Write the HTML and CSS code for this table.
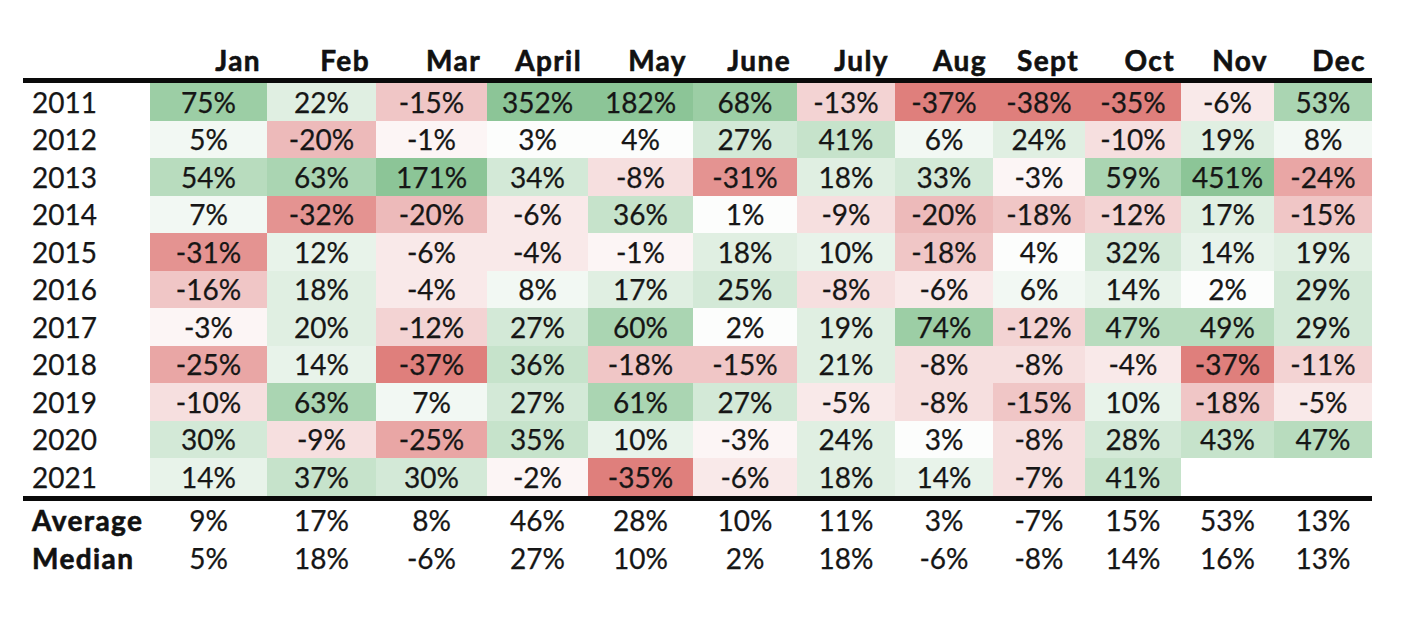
FILE: index.html
```html
<!DOCTYPE html>
<html lang="en">
<head>
<meta charset="utf-8">
<title>Monthly returns</title>
<link rel="stylesheet" href="styles.css">
</head>
<body>
<div class="sheet">
  <div class="row head">
    <div></div><div class="m">Jan</div><div class="m">Feb</div><div class="m">Mar</div><div class="m">April</div><div class="m">May</div><div class="m">June</div><div class="m">July</div><div class="m">Aug</div><div class="m">Sept</div><div class="m">Oct</div><div class="m">Nov</div><div class="m">Dec</div>
  </div>
  <div class="row">
    <div class="yr">2011</div><div class="c p8">75%</div><div class="c p3">22%</div><div class="c n4">-15%</div><div class="c p9">352%</div><div class="c p9">182%</div><div class="c p8">68%</div><div class="c n3">-13%</div><div class="c n8">-37%</div><div class="c n8">-38%</div><div class="c n8">-35%</div><div class="c n1">-6%</div><div class="c p7">53%</div>
  </div>
  <div class="row">
    <div class="yr">2012</div><div class="c p1">5%</div><div class="c n5">-20%</div><div class="c n0">-1%</div><div class="c p0">3%</div><div class="c p0">4%</div><div class="c p4">27%</div><div class="c p5">41%</div><div class="c p1">6%</div><div class="c p3">24%</div><div class="c n2">-10%</div><div class="c p3">19%</div><div class="c p1">8%</div>
  </div>
  <div class="row">
    <div class="yr">2013</div><div class="c p6">54%</div><div class="c p7">63%</div><div class="c p9">171%</div><div class="c p4">34%</div><div class="c n2">-8%</div><div class="c n7">-31%</div><div class="c p3">18%</div><div class="c p4">33%</div><div class="c n0">-3%</div><div class="c p7">59%</div><div class="c p9">451%</div><div class="c n6">-24%</div>
  </div>
  <div class="row">
    <div class="yr">2014</div><div class="c p1">7%</div><div class="c n7">-32%</div><div class="c n5">-20%</div><div class="c n1">-6%</div><div class="c p5">36%</div><div class="c p0">1%</div><div class="c n2">-9%</div><div class="c n5">-20%</div><div class="c n4">-18%</div><div class="c n3">-12%</div><div class="c p3">17%</div><div class="c n4">-15%</div>
  </div>
  <div class="row">
    <div class="yr">2015</div><div class="c n7">-31%</div><div class="c p2">12%</div><div class="c n1">-6%</div><div class="c n1">-4%</div><div class="c n0">-1%</div><div class="c p3">18%</div><div class="c p2">10%</div><div class="c n4">-18%</div><div class="c p0">4%</div><div class="c p4">32%</div><div class="c p2">14%</div><div class="c p3">19%</div>
  </div>
  <div class="row">
    <div class="yr">2016</div><div class="c n4">-16%</div><div class="c p3">18%</div><div class="c n1">-4%</div><div class="c p1">8%</div><div class="c p3">17%</div><div class="c p4">25%</div><div class="c n2">-8%</div><div class="c n1">-6%</div><div class="c p1">6%</div><div class="c p2">14%</div><div class="c p0">2%</div><div class="c p4">29%</div>
  </div>
  <div class="row">
    <div class="yr">2017</div><div class="c n0">-3%</div><div class="c p3">20%</div><div class="c n3">-12%</div><div class="c p4">27%</div><div class="c p7">60%</div><div class="c p0">2%</div><div class="c p3">19%</div><div class="c p8">74%</div><div class="c n3">-12%</div><div class="c p6">47%</div><div class="c p6">49%</div><div class="c p4">29%</div>
  </div>
  <div class="row">
    <div class="yr">2018</div><div class="c n6">-25%</div><div class="c p2">14%</div><div class="c n8">-37%</div><div class="c p5">36%</div><div class="c n4">-18%</div><div class="c n4">-15%</div><div class="c p3">21%</div><div class="c n2">-8%</div><div class="c n2">-8%</div><div class="c n1">-4%</div><div class="c n8">-37%</div><div class="c n3">-11%</div>
  </div>
  <div class="row">
    <div class="yr">2019</div><div class="c n2">-10%</div><div class="c p7">63%</div><div class="c p1">7%</div><div class="c p4">27%</div><div class="c p7">61%</div><div class="c p4">27%</div><div class="c n1">-5%</div><div class="c n2">-8%</div><div class="c n4">-15%</div><div class="c p2">10%</div><div class="c n4">-18%</div><div class="c n1">-5%</div>
  </div>
  <div class="row">
    <div class="yr">2020</div><div class="c p4">30%</div><div class="c n2">-9%</div><div class="c n6">-25%</div><div class="c p5">35%</div><div class="c p2">10%</div><div class="c n0">-3%</div><div class="c p3">24%</div><div class="c p0">3%</div><div class="c n2">-8%</div><div class="c p4">28%</div><div class="c p5">43%</div><div class="c p6">47%</div>
  </div>
  <div class="row last">
    <div class="yr">2021</div><div class="c p2">14%</div><div class="c p5">37%</div><div class="c p4">30%</div><div class="c n0">-2%</div><div class="c n8">-35%</div><div class="c n1">-6%</div><div class="c p3">18%</div><div class="c p2">14%</div><div class="c n2">-7%</div><div class="c p5">41%</div><div class="c"></div><div class="c"></div>
  </div>
  <div class="row stat">
    <div class="yr label">Average</div><div class="c">9%</div><div class="c">17%</div><div class="c">8%</div><div class="c">46%</div><div class="c">28%</div><div class="c">10%</div><div class="c">11%</div><div class="c">3%</div><div class="c">-7%</div><div class="c">15%</div><div class="c">53%</div><div class="c">13%</div>
  </div>
  <div class="row stat">
    <div class="yr label">Median</div><div class="c">5%</div><div class="c">18%</div><div class="c">-6%</div><div class="c">27%</div><div class="c">10%</div><div class="c">2%</div><div class="c">18%</div><div class="c">-6%</div><div class="c">-8%</div><div class="c">14%</div><div class="c">16%</div><div class="c">13%</div>
  </div>
</div>
</body>
</html>
```

FILE: styles.css
```css
html, body {
  margin: 0;
  padding: 0;
  background: #ffffff;
}

body {
  width: 1416px;
  height: 630px;
  overflow: hidden;
  font-family: "Lato", "Liberation Sans", sans-serif;
  color: #161616;
}

.sheet {
  margin: 42px 0 0 23px;
  width: 1349px;
}

.row {
  display: grid;
  grid-template-columns: 127px 117px 109px 111px 101px 105px 104px 98px 98px 92px 96px 93px 98px;
  height: 37.5px;
  font-size: 28px;
  line-height: 1;
}

.head {
  height: 36px;
  border-bottom: 5px solid #0a0a0a;
}

.m {
  display: flex;
  align-items: center;
  justify-content: flex-end;
  padding-right: 6px;
  font-weight: 700;
  font-size: 28px;
  letter-spacing: 1.4px;
  -webkit-text-stroke: 0.6px #111;
  color: #111;
}

.yr {
  display: flex;
  align-items: center;
  padding-left: 9px;
  -webkit-text-stroke: 0.25px #161616;
}

.label {
  font-weight: 700;
  letter-spacing: 1.4px;
  -webkit-text-stroke: 0.6px #111;
  color: #111;
}

.c {
  display: flex;
  align-items: center;
  justify-content: center;
  -webkit-text-stroke: 0.25px #161616;
}

.last {
  border-bottom: 5px solid #0a0a0a;
}

.stat {
  height: 37.5px;
}

.last + .stat {
  margin-top: 1px;
}

/* positive scale */
.p0 { background: #fcfdfc; }
.p1 { background: #f2f8f3; }
.p2 { background: #e8f3ea; }
.p3 { background: #e0efe2; }
.p4 { background: #d3e9d7; }
.p5 { background: #c6e3cb; }
.p6 { background: #b8dcbe; }
.p7 { background: #aad5b2; }
.p8 { background: #9ccea5; }
.p9 { background: #8cc597; }

/* negative scale */
.n0 { background: #fcf5f5; }
.n1 { background: #f9e9e9; }
.n2 { background: #f6dfdf; }
.n3 { background: #f3d3d3; }
.n4 { background: #f0c6c6; }
.n5 { background: #edbaba; }
.n6 { background: #e9a6a5; }
.n7 { background: #e49391; }
.n8 { background: #df7f7c; }
```
